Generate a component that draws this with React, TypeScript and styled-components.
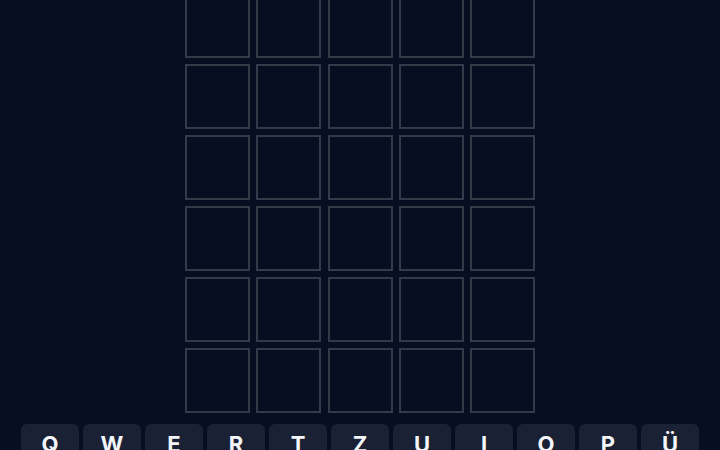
import React from 'react';
import styled, { createGlobalStyle } from 'styled-components';

const GlobalStyle = createGlobalStyle`
  html, body {
    margin: 0;
    padding: 0;
    background: #070e21;
  }
  body {
    font-family: Inter, "Noto Sans", "Liberation Sans", sans-serif;
  }
`;

const Page = styled.main`
  height: 100vh;
  overflow: hidden;
  display: flex;
  flex-direction: column;
  align-items: center;
  gap: 11px;
  background: #070e21;
`;

const Board = styled.div`
  margin-top: -7px;
  display: grid;
  grid-template-columns: repeat(5, 65px);
  grid-auto-rows: 65px;
  column-gap: 6.25px;
  row-gap: 6px;
`;

const Tile = styled.div`
  box-sizing: border-box;
  border: 2px solid #343a48;
  background: #070e21;
`;

const Keyboard = styled.div`
  display: flex;
  flex-direction: column;
  gap: 8px;
`;

const KeyRow = styled.div`
  display: flex;
  gap: 4px;
  justify-content: center;
`;

const Key = styled.button<{ $wide?: boolean }>`
  width: ${(p) => (p.$wide ? '89px' : '58px')};
  height: 58px;
  border: none;
  border-radius: 6px;
  background: #1a2135;
  color: #f3f5f9;
  font-family: Inter, "Noto Sans", "Liberation Sans", sans-serif;
  font-size: 22px;
  font-weight: 700;
  display: flex;
  align-items: flex-start;
  justify-content: center;
  padding: 7px 0 0;
  cursor: pointer;
`;

const rows = [
  ['Q', 'W', 'E', 'R', 'T', 'Z', 'U', 'I', 'O', 'P', 'Ü'],
  ['A', 'S', 'D', 'F', 'G', 'H', 'J', 'K', 'L', 'Ö', 'Ä'],
  ['ENTER', 'Y', 'X', 'C', 'V', 'B', 'N', 'M', '⌫'],
];

export default function App() {
  return (
    <>
      <GlobalStyle />
      <Page>
        <Board>
          {Array.from({ length: 30 }).map((_, i) => (
            <Tile key={i} />
          ))}
        </Board>
        <Keyboard>
          {rows.map((row, r) => (
            <KeyRow key={r}>
              {row.map((k) => (
                <Key key={k} $wide={k.length > 1 || k === '⌫'}>
                  {k}
                </Key>
              ))}
            </KeyRow>
          ))}
        </Keyboard>
      </Page>
    </>
  );
}
